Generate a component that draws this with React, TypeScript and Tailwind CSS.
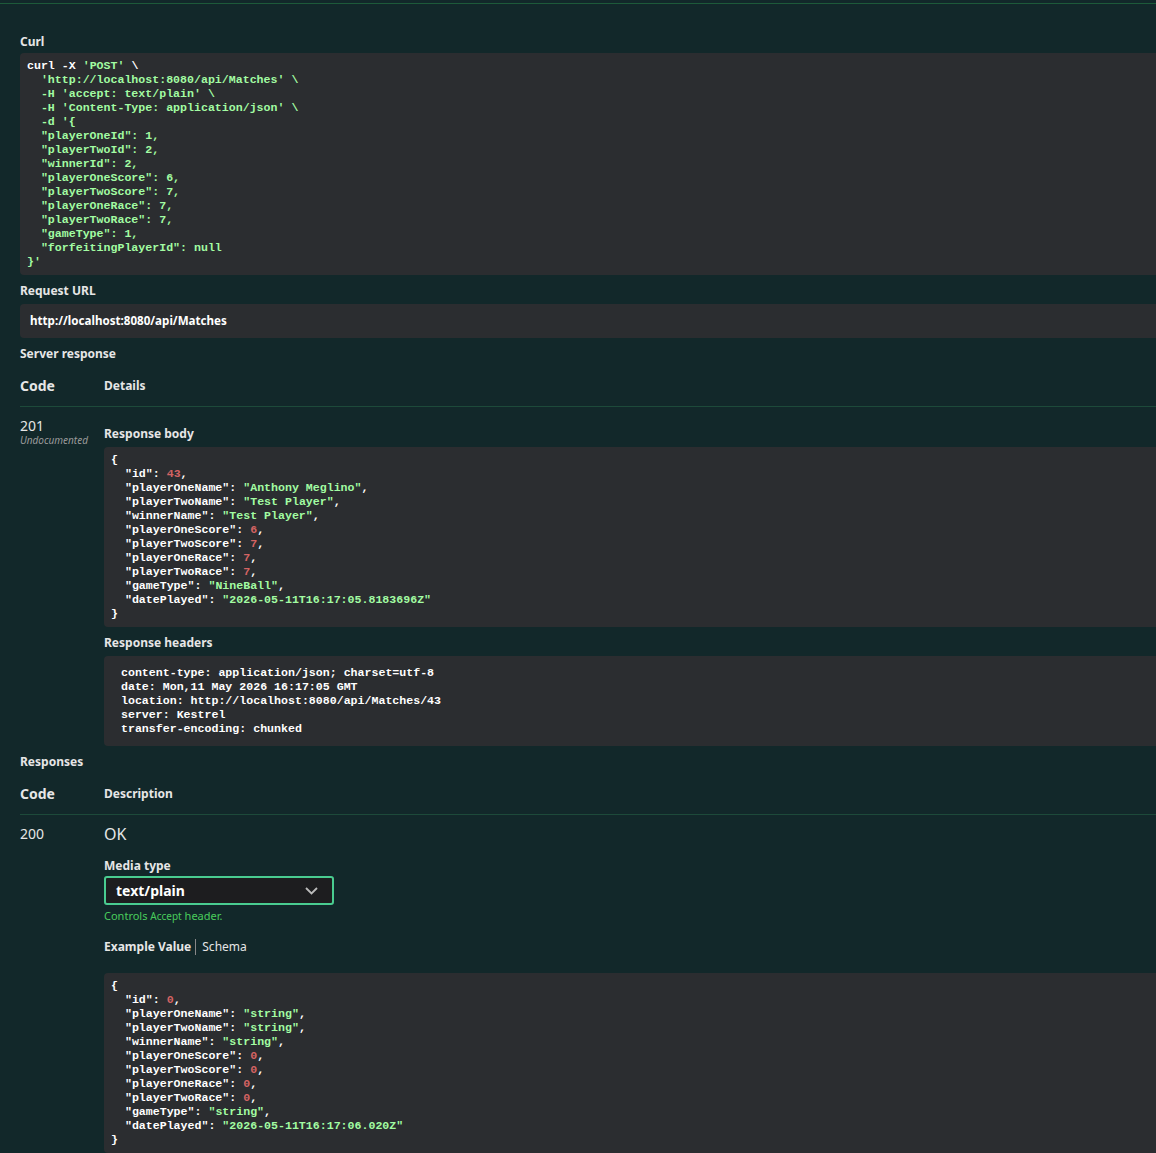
import React from "react";

const mono = "font-['DejaVu_Sans_Mono'] text-[11.6px] leading-[14px] font-bold";
const K = ({ c }: { c: string }) => <span className="text-white">{c}</span>;
const S = ({ c }: { c: string }) => <span className="text-[#a2fca2]">{c}</span>;
const N = ({ c }: { c: string }) => <span className="text-[#d36363]">{c}</span>;

type Row = [string, string, "s" | "n"];

const JsonBlock = ({ rows }: { rows: Row[] }) => (
  <pre className={`${mono} bg-[#2b2d30] rounded-l px-[7px] py-[6px] text-white whitespace-pre`}>
    {"{\n"}
    {rows.map(([k, v, t], i) => (
      <React.Fragment key={k}>
        {"  "}
        <K c={`"${k}"`} />
        {": "}
        {t === "s" ? <S c={`"${v}"`} /> : <N c={v} />}
        {i < rows.length - 1 ? "," : ""}
        {"\n"}
      </React.Fragment>
    ))}
    {"}"}
  </pre>
);

const curl = `  'http://localhost:8080/api/Matches' \\
  -H 'accept: text/plain' \\
  -H 'Content-Type: application/json' \\
  -d '{
  "playerOneId": 1,
  "playerTwoId": 2,
  "winnerId": 2,
  "playerOneScore": 6,
  "playerTwoScore": 7,
  "playerOneRace": 7,
  "playerTwoRace": 7,
  "gameType": 1,
  "forfeitingPlayerId": null
}'`;

const body: Row[] = [
  ["id", "43", "n"],
  ["playerOneName", "Anthony Meglino", "s"],
  ["playerTwoName", "Test Player", "s"],
  ["winnerName", "Test Player", "s"],
  ["playerOneScore", "6", "n"],
  ["playerTwoScore", "7", "n"],
  ["playerOneRace", "7", "n"],
  ["playerTwoRace", "7", "n"],
  ["gameType", "NineBall", "s"],
  ["datePlayed", "2026-05-11T16:17:05.8183696Z", "s"],
];

const example: Row[] = [
  ["id", "0", "n"],
  ["playerOneName", "string", "s"],
  ["playerTwoName", "string", "s"],
  ["winnerName", "string", "s"],
  ["playerOneScore", "0", "n"],
  ["playerTwoScore", "0", "n"],
  ["playerOneRace", "0", "n"],
  ["playerTwoRace", "0", "n"],
  ["gameType", "string", "s"],
  ["datePlayed", "2026-05-11T16:17:06.020Z", "s"],
];

const Label = ({ children, cls = "" }: { children: React.ReactNode; cls?: string }) => (
  <div className={`text-[12px] leading-[14px] font-bold text-[#e6e6e6] ${cls}`}>{children}</div>
);

export default function App() {
  return (
    <div className="min-h-[1153px] bg-[#12282a] font-['Liberation_Sans'] text-[#e6e6e6] overflow-hidden">
      <div className="h-[4px] border-b border-[#1d5a3a]" />
      <div className="pl-[20px] pt-[31px]">
        <Label cls="mb-[4px]">Curl</Label>
        <pre className={`${mono} bg-[#2b2d30] rounded-l px-[7px] py-[6px] text-[#a2fca2] whitespace-pre h-[222px]`}>
          <span className="text-white">curl -X </span>'POST'<span className="text-white"> \</span>
          {"\n"}
          {curl}
        </pre>
        <Label cls="mt-[9px] mb-[6px]">Request URL</Label>
        <div className={`${mono} bg-[#2b2d30] rounded-l px-[10px] h-[34px] flex items-center text-white`}>http://localhost:8080/api/Matches</div>
        <Label cls="mt-[9px]">Server response</Label>
        <div className="flex h-[46px] items-end pb-[12px] border-b border-[#1d4a3a] font-bold">
          <div className="w-[84px] text-[14px] leading-[16px]">Code</div>
          <div className="text-[12px] leading-[16px]">Details</div>
        </div>
        <div className="flex pt-[11px]">
          <div className="w-[84px]">
            <div className="text-[14px] leading-[16px]">201</div>
            <div className="font-['DejaVu_Sans_Mono'] italic text-[10px] leading-[12px] text-[#9a9a9a]">Undocumented</div>
          </div>
          <div className="flex-1 pt-[9px]">
            <Label cls="mb-[6px]">Response body</Label>
            <JsonBlock rows={body} />
            <Label cls="mt-[9px] mb-[6px]">Response headers</Label>
            <pre className={`${mono} bg-[#2b2d30] rounded-l px-[17px] py-[10px] text-white whitespace-pre`}>
{`content-type: application/json; charset=utf-8
date: Mon,11 May 2026 16:17:05 GMT
location: http://localhost:8080/api/Matches/43
server: Kestrel
transfer-encoding: chunked`}
            </pre>
          </div>
        </div>
        <Label cls="mt-[9px]">Responses</Label>
        <div className="flex h-[46px] items-end pb-[12px] border-b border-[#1d4a3a] font-bold">
          <div className="w-[84px] text-[14px] leading-[16px]">Code</div>
          <div className="text-[12px] leading-[16px]">Description</div>
        </div>
        <div className="flex pt-[9px]">
          <div className="w-[84px] text-[14px] leading-[16px] pt-[2px]">200</div>
          <div className="flex-1">
            <div className="text-[16px] leading-[20px]">OK</div>
            <Label cls="mt-[15px] text-[11px]">Media type</Label>
            <div className="mt-[3px] w-[230px] h-[29px] border-2 border-[#49cc90] bg-[#1d1d1f] rounded-[3px] flex items-center justify-between pl-[10px] pr-[14px]">
              <span className="text-[14px] font-bold text-white">text/plain</span>
              <svg width="13" height="8" viewBox="0 0 13 8" fill="none" stroke="#bbb" strokeWidth="1.8"><path d="M1 1l5.5 5.5L12 1" /></svg>
            </div>
            <div className="text-[11px] leading-[14px] text-[#49cc5c] mt-[4px]">
              Controls <span className="font-['DejaVu_Sans_Mono'] text-[10px]">Accept</span> header.
            </div>
            <div className="flex items-center mt-[16px] text-[12px] leading-[14px]">
              <span className="font-bold pr-[4px]">Example Value</span>
              <span className="border-l border-[#888] pl-[6px] h-[16px] leading-[16px]">Schema</span>
            </div>
            <div className="mt-[18px]">
              <JsonBlock rows={example} />
            </div>
          </div>
        </div>
      </div>
    </div>
  );
}
